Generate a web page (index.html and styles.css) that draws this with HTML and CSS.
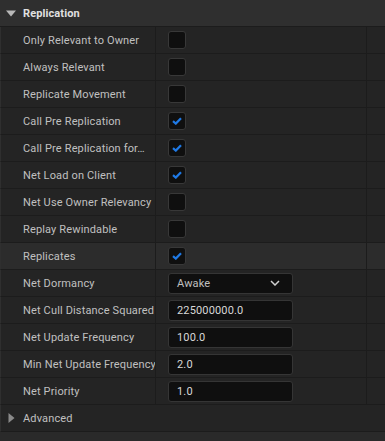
FILE: index.html
```html
<!DOCTYPE html>
<html>
<head>
<meta charset="utf-8">
<link rel="stylesheet" href="styles.css">
</head>
<body>
<div class="panel">
  <div class="header">
    <svg class="tri" width="10" height="7" viewBox="0 0 10 7"><path d="M0 0.5 L10 0.5 L5 6.5 Z" fill="#b8b8b8"/></svg>
    <span>Replication</span>
  </div>
  <div class="row"><div class="label">Only Relevant to Owner</div><div class="value"><span class="cb"></span></div><div class="extra"></div></div>
  <div class="row"><div class="label">Always Relevant</div><div class="value"><span class="cb"></span></div><div class="extra"></div></div>
  <div class="row"><div class="label">Replicate Movement</div><div class="value"><span class="cb"></span></div><div class="extra"></div></div>
  <div class="row"><div class="label">Call Pre Replication</div><div class="value"><span class="cb on"><svg width="10" height="8" viewBox="0 0 10 8"><path d="M1 4.2 L3.8 6.6 L9 1.2" stroke="#1f7ae6" stroke-width="2.2" fill="none"/></svg></span></div><div class="extra"></div></div>
  <div class="row"><div class="label">Call Pre Replication for…</div><div class="value"><span class="cb on"><svg width="10" height="8" viewBox="0 0 10 8"><path d="M1 4.2 L3.8 6.6 L9 1.2" stroke="#1f7ae6" stroke-width="2.2" fill="none"/></svg></span></div><div class="extra"></div></div>
  <div class="row"><div class="label">Net Load on Client</div><div class="value"><span class="cb on"><svg width="10" height="8" viewBox="0 0 10 8"><path d="M1 4.2 L3.8 6.6 L9 1.2" stroke="#1f7ae6" stroke-width="2.2" fill="none"/></svg></span></div><div class="extra"></div></div>
  <div class="row"><div class="label">Net Use Owner Relevancy</div><div class="value"><span class="cb"></span></div><div class="extra"></div></div>
  <div class="row"><div class="label">Replay Rewindable</div><div class="value"><span class="cb"></span></div><div class="extra"></div></div>
  <div class="row hl"><div class="label">Replicates</div><div class="value"><span class="cb on"><svg width="10" height="8" viewBox="0 0 10 8"><path d="M1 4.2 L3.8 6.6 L9 1.2" stroke="#1f7ae6" stroke-width="2.2" fill="none"/></svg></span></div><div class="extra"></div></div>
  <div class="row"><div class="label">Net Dormancy</div><div class="value"><div class="field combo"><span>Awake</span><svg width="10" height="6" viewBox="0 0 10 6"><path d="M1 1 L5 5 L9 1" stroke="#d0d0d0" stroke-width="1.5" fill="none"/></svg></div></div><div class="extra"></div></div>
  <div class="row"><div class="label">Net Cull Distance Squared</div><div class="value"><div class="field">225000000.0</div></div><div class="extra"></div></div>
  <div class="row"><div class="label">Net Update Frequency</div><div class="value"><div class="field">100.0</div></div><div class="extra"></div></div>
  <div class="row"><div class="label">Min Net Update Frequency</div><div class="value"><div class="field">2.0</div></div><div class="extra"></div></div>
  <div class="row"><div class="label">Net Priority</div><div class="value"><div class="field">1.0</div></div><div class="extra"></div></div>
  <div class="adv">
    <svg class="tri2" width="7" height="10" viewBox="0 0 7 10"><path d="M0.5 0 L6.5 5 L0.5 10 Z" fill="#8a8a8a"/></svg>
    <span>Advanced</span>
  </div>
  <div class="bottom"></div>
</div>
</body>
</html>
```
FILE: styles.css
```css
html, body {
  margin: 0;
  padding: 0;
  background: #2a2a2a;
}
body {
  font-family: Roboto, "Noto Sans", sans-serif;
  font-size: 11px;
  color: #c0c0c0;
  width: 385px;
  height: 441px;
  overflow: hidden;
}
.panel {
  display: flex;
  flex-direction: column;
}
.header {
  height: 27px;
  box-sizing: border-box;
  background: #2f2f2f;
  border-bottom: 1px solid #1c1c1c;
  display: flex;
  align-items: center;
  padding-left: 6px;
  font-weight: bold;
  color: #e0e0e0;
  font-size: 11px;
  letter-spacing: 0.1px;
}
.header .tri {
  margin-right: 7px;
}
.row {
  height: 27px;
  box-sizing: border-box;
  border-bottom: 1px solid #1c1c1c;
  border-left: 1px solid #2f2f2f;
  display: flex;
  background: #242424;
}
.row.hl {
  background: #2c2c2c;
}
.label {
  width: 155px;
  box-sizing: border-box;
  padding-left: 22px;
  display: flex;
  align-items: center;
  border-right: 1px solid #1c1c1c;
  color: #c0c0c0;
  white-space: nowrap;
  overflow: hidden;
  letter-spacing: 0.15px;
}
.value {
  width: 211px;
  box-sizing: border-box;
  padding-left: 12px;
  display: flex;
  align-items: center;
  border-right: 1px solid #1c1c1c;
}
.extra {
  flex: 1;
}
.cb {
  width: 18px;
  height: 18px;
  box-sizing: border-box;
  background: #0f0f0f;
  border: 1px solid #383838;
  border-radius: 3px;
  display: flex;
  align-items: center;
  justify-content: center;
}
.field {
  width: 125px;
  height: 21px;
  box-sizing: border-box;
  background: #0f0f0f;
  border: 1px solid #353535;
  border-radius: 3px;
  display: flex;
  align-items: center;
  padding-left: 8px;
  color: #d8d8d8;
  letter-spacing: 0.15px;
}
.field.combo {
  justify-content: space-between;
  padding-right: 12px;
  color: #c0c0c0;
}
.adv {
  height: 27px;
  box-sizing: border-box;
  background: #242424;
  border-bottom: 1px solid #1c1c1c;
  border-left: 1px solid #2f2f2f;
  display: flex;
  align-items: center;
  padding-left: 7px;
  color: #c0c0c0;
  letter-spacing: 0.15px;
}
.adv .tri2 {
  margin-right: 8px;
}
.bottom {
  height: 9px;
  background: #2a2a2a;
}
```
